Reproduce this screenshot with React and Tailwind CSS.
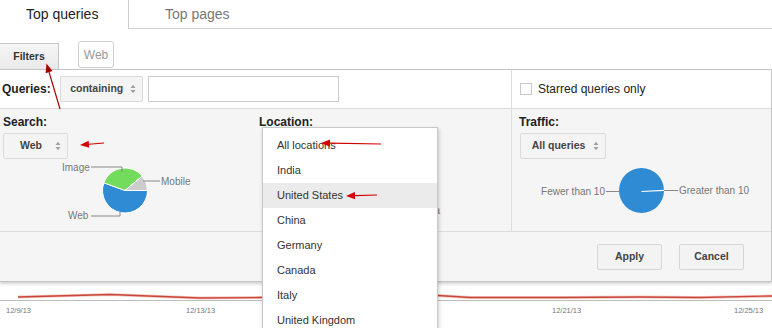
import React from 'react';

const LOCATIONS = ['All locations', 'India', 'United States', 'China', 'Germany', 'Canada', 'Italy', 'United Kingdom'];

function UpDown() {
  return (
    <svg width="6" height="10" viewBox="0 0 6 10" className="block">
      <path d="M0.5 4 L3 0.8 L5.5 4 Z" fill="#a0a0a0" />
      <path d="M0.5 6 L3 9.2 L5.5 6 Z" fill="#a0a0a0" />
    </svg>
  );
}

function Sel({ label, w }) {
  return (
    <div className={`flex h-[26px] items-center rounded-[2px] border border-[#dadada] bg-[#f4f4f4] pl-[3px] pr-[6px] text-[10.5px] font-bold text-[#444] ${w}`}>
      <span className="flex-1 text-center">{label}</span>
      <UpDown />
    </div>
  );
}

function Btn({ children }) {
  return (
    <div className="flex h-[26px] w-[65px] items-center justify-center rounded-[2px] border border-[#d6d6d6] bg-[#f3f3f3] text-[10.5px] font-bold text-[#444]">
      {children}
    </div>
  );
}

function Arrow({ x1, y1, x2, y2, color = '#d40000' }) {
  // line from tail (x1,y1) to tip (x2,y2)
  const dx = x2 - x1;
  const dy = y2 - y1;
  const n = Math.hypot(dx, dy);
  const ux = dx / n;
  const uy = dy / n;
  const bx = x2 - ux * 9;
  const by = y2 - uy * 9;
  const px = -uy * 3.6;
  const py = ux * 3.6;
  return (
    <g>
      <line x1={x1} y1={y1} x2={bx} y2={by} stroke={color} strokeWidth="1.2" />
      <polygon points={`${x2},${y2} ${bx + px},${by + py} ${bx - px},${by - py}`} fill={color} />
    </g>
  );
}

export default function App() {
  return (
    <div className="relative h-[328px] w-[772px] overflow-hidden bg-white font-['Liberation_Sans',Arial,sans-serif]">
      {/* tabs */}
      <div className="flex h-[29px]">
        <div className="flex w-[128px] items-center pl-[26px] text-[14px] text-[#222]">Top queries</div>
        <div className="flex w-[134px] items-center border-b border-l border-[#cfcfcf] pl-[36px] text-[14px] text-[#777]">Top pages</div>
        <div className="flex-1 border-b border-[#cfcfcf]" />
      </div>

      {/* filter toggles */}
      <div className="flex h-[40px] items-end">
        <div className="flex h-[26px] w-[59px] items-center justify-center border-r border-t border-[#c6c6c6] bg-linear-to-b from-[#f6f6f6] to-[#e9e9e9] text-[10.5px] font-bold text-[#333]">
          Filters
        </div>
        <div className="mb-[1px] ml-[19px] flex h-[27px] w-[36px] items-center justify-center rounded-[3px] border border-[#cfcfcf] text-[12px] text-[#999]">
          Web
        </div>
      </div>

      {/* panel */}
      <div className="border-b border-r border-t border-[#c4c4c4] shadow-[0_2px_3px_rgba(0,0,0,0.18)]">
        <div className="flex h-[39px] border-b border-[#dddddd]">
          <div className="flex w-[512px] items-center border-r border-[#dddddd] pl-[2px]">
            <span className="text-[12px] font-bold text-[#222]">Queries:</span>
            <div className="ml-[9px]">
              <Sel label="containing" w="w-[83px]" />
            </div>
            <div className="ml-[5px] h-[26px] w-[191px] border border-[#cccccc] bg-white" />
          </div>
          <div className="flex flex-1 items-center pl-[8px]">
            <div className="h-[12px] w-[12px] border border-[#c8c8c8] bg-white" />
            <span className="ml-[6px] text-[12px] text-[#222]">Starred queries only</span>
          </div>
        </div>

        <div className="flex h-[123px] border-b border-[#dddddd] bg-[#f5f5f5]">
          <div className="flex w-[512px] border-r border-[#dddddd]">
            <div className="w-[257px] pl-[3px] pt-[6px]">
              <div className="text-[12px] leading-[14px] font-bold text-[#222]">Search:</div>
              <div className="mt-[4px]">
                <Sel label="Web" w="w-[65px]" />
              </div>
              <svg width="200" height="62" className="-ml-[3px] mt-[1px] block">
                <path d="M125 30.5 L147.5 30.5 A22.5 22.5 0 1 1 103.86 22.8 Z" fill="#2f8bd3" stroke="#fff" strokeWidth="1" />
                <path d="M125 30.5 L103.86 22.8 A22.5 22.5 0 0 1 142.24 16.04 Z" fill="#74dc5c" stroke="#fff" strokeWidth="1" />
                <path d="M125 30.5 L142.24 16.04 A22.5 22.5 0 0 1 147.5 30.5 Z" fill="#cccccc" stroke="#fff" strokeWidth="1" />
                <polyline points="91,7 122,7 122,12" fill="none" stroke="#888" strokeWidth="1" />
                <line x1="143" y1="21" x2="160" y2="21" stroke="#888" strokeWidth="1" />
                <polyline points="91,56 120,56 120,52" fill="none" stroke="#888" strokeWidth="1" />
                <text x="62" y="10.5" fontSize="10" fill="#777">Image</text>
                <text x="161" y="25" fontSize="10" fill="#777">Mobile</text>
                <text x="68" y="59" fontSize="10" fill="#777">Web</text>
              </svg>
            </div>
            <div className="flex-1 pl-[3px] pt-[6px]">
              <div className="text-[12px] leading-[14px] font-bold text-[#222]">Location:</div>
              <svg width="255" height="92" className="-ml-[3px] mt-[4px] block">
                <text x="184" y="81" fontSize="10" fill="#777" textAnchor="end">India</text>
              </svg>
            </div>
          </div>
          <div className="flex-1 pl-[7px] pt-[6px]">
            <div className="text-[12px] leading-[14px] font-bold text-[#222]">Traffic:</div>
            <div className="ml-[1px] mt-[4px]">
              <Sel label="All queries" w="w-[86px]" />
            </div>
            <svg width="258" height="62" className="-ml-[7px] mt-[1px] block">
              <circle cx="129.5" cy="30.5" r="22.5" fill="#2f8bd3" />
              <line x1="129.5" y1="31.5" x2="152" y2="30.3" stroke="#fff" strokeWidth="1.2" />
              <line x1="94" y1="31.5" x2="107" y2="31.5" stroke="#888" strokeWidth="1" />
              <line x1="152" y1="30.5" x2="166" y2="30.5" stroke="#888" strokeWidth="1" />
              <text x="93" y="35" fontSize="10" fill="#777" textAnchor="end">Fewer than 10</text>
              <text x="167" y="34" fontSize="10" fill="#777">Greater than 10</text>
            </svg>
          </div>
        </div>

        <div className="flex h-[49px] items-center justify-end gap-[17px] bg-[#f5f5f5] pr-[27px]">
          <Btn>Apply</Btn>
          <Btn>Cancel</Btn>
        </div>
      </div>

      {/* chart below */}
      <svg width="772" height="46" className="block">
        <polyline
          points="18,15 110,12.5 200,16 260,15.5 300,14.5 400,13 430,13 470,15.5 560,15.5 640,15 700,15.5 772,14"
          fill="none"
          stroke="#f3c9c2"
          strokeWidth="3"
        />
        <polyline
          points="18,15 110,12.5 200,16 260,15.5 300,14.5 400,13 430,13 470,15.5 560,15.5 640,15 700,15.5 772,14"
          fill="none"
          stroke="#c9473a"
          strokeWidth="1.3"
        />
        <line x1="0" y1="18.5" x2="772" y2="18.5" stroke="#bdbdbd" strokeWidth="1" />
        <text x="6" y="31" fontSize="7.5" fill="#777">12/9/13</text>
        <text x="186" y="31" fontSize="7.5" fill="#777">12/13/13</text>
        <text x="552" y="31" fontSize="7.5" fill="#777">12/21/13</text>
        <text x="734" y="31" fontSize="7.5" fill="#777">12/25/13</text>
      </svg>

      {/* open location menu */}
      <div className="absolute left-[262px] top-[127px] h-[215px] w-[176px] border border-[#c8c8c8] bg-white pt-[5px] shadow-[1px_2px_4px_rgba(0,0,0,0.2)]">
        {LOCATIONS.map(l => (
          <div
            key={l}
            className={`flex h-[25px] items-center pl-[14px] text-[11px] text-[#333] ${l === 'United States' ? 'bg-[#ebebeb]' : ''}`}
          >
            {l}
          </div>
        ))}
      </div>

      {/* annotation arrows */}
      <svg width="772" height="328" className="pointer-events-none absolute left-0 top-0">
        <Arrow x1={60} y1={109} x2={46.5} y2={63.5} color="#a80000" />
        <Arrow x1={104} y1={143} x2={80} y2={145} />
        <Arrow x1={381} y1={144} x2={321} y2={143} />
        <Arrow x1={377} y1={195} x2={346} y2={196} />
      </svg>
    </div>
  );
}
